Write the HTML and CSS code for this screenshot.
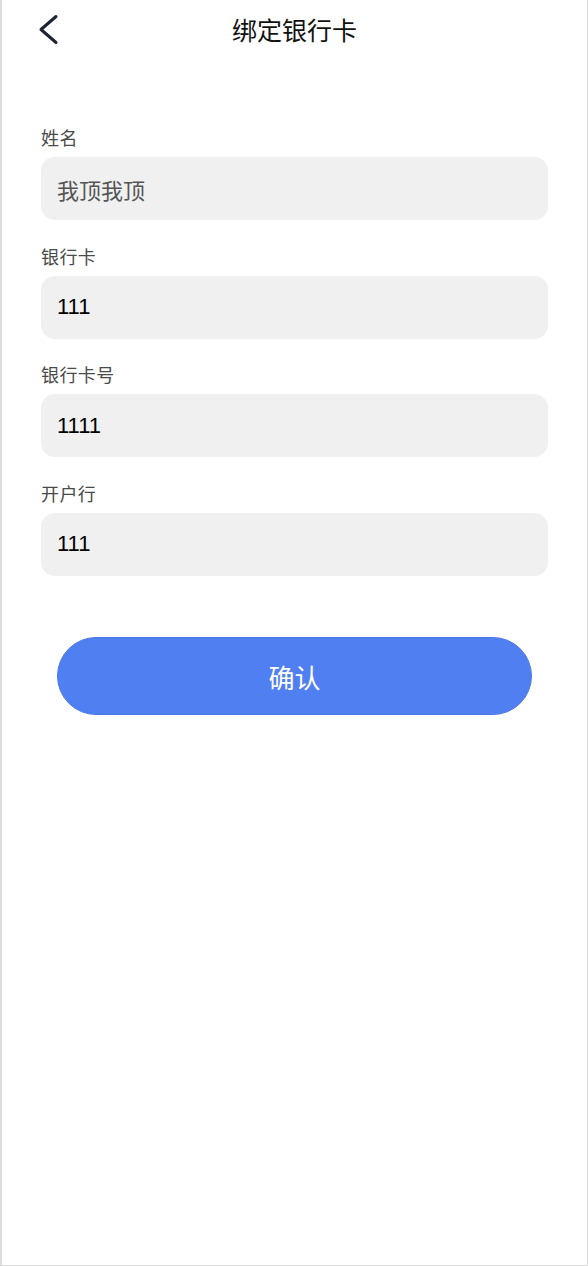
FILE: index.html
```html
<!DOCTYPE html>
<html lang="zh">
<head>
<meta charset="utf-8">
<title>绑定银行卡</title>
<link rel="stylesheet" href="styles.css">
</head>
<body>
<div class="page">
  <header class="header">
    <button class="back" aria-label="返回">
      <svg width="24" height="32" viewBox="0 0 24 32"><polyline points="19,2.5 4,15.5 19,28.5" fill="none" stroke="#1c2333" stroke-width="3" stroke-linecap="round" stroke-linejoin="round"/></svg>
    </button>
    <h1 class="title">绑定银行卡</h1>
  </header>
  <form class="form">
    <div class="field">
      <label class="label">姓名</label>
      <div class="input placeholder">我顶我顶</div>
    </div>
    <div class="field">
      <label class="label">银行卡</label>
      <div class="input">111</div>
    </div>
    <div class="field">
      <label class="label">银行卡号</label>
      <div class="input">1111</div>
    </div>
    <div class="field">
      <label class="label">开户行</label>
      <div class="input">111</div>
    </div>
    <div class="actions">
      <button type="button" class="confirm">确认</button>
    </div>
  </form>
</div>
</body>
</html>
```

FILE: styles.css
```css
* { box-sizing: border-box; }
html, body { margin: 0; padding: 0; background: #fff; }
body { font-family: "Liberation Sans", "Noto Sans CJK SC", sans-serif; }
.page {
  height: 1266px;
  border: 1px solid #dcdcdc;
  border-top: 0;
  border-left-width: 2px;
  background: #fff;
}
.header {
  height: 60px;
  display: flex;
  align-items: center;
  justify-content: center;
  position: relative;
}
.back {
  position: absolute;
  left: 35px;
  top: 14px;
  padding: 0;
  border: 0;
  background: none;
  width: 24px;
  height: 32px;
}
.back svg { display: block; }
.title {
  margin: 0 0 2px;
  font-size: 25px;
  font-weight: normal;
  color: #111;
  line-height: 30px;
  font-family: "Noto Sans CJK SC", sans-serif;
}
.form {
  padding: 65px 39px 0 39px;
  display: flex;
  flex-direction: column;
  gap: 23.5px;
}
.field { display: flex; flex-direction: column; gap: 8px; }
.label {
  font-size: 18px;
  line-height: 24px;
  color: #4a4a4a;
  font-family: "Noto Sans CJK SC", sans-serif;
  letter-spacing: 0.4px;
}
.input {
  height: 63px;
  border-radius: 14px;
  background: #f0f0f0;
  display: flex;
  align-items: center;
  padding-left: 16px;
  font-size: 22px;
  color: #000;
  font-family: "Liberation Sans", "Noto Sans CJK SC", sans-serif;
}
.input.placeholder {
  color: #555;
  font-size: 22px;
  font-family: "Noto Sans CJK SC", sans-serif;
}
.actions {
  display: flex;
  justify-content: center;
  padding-top: 38px;
}
.confirm {
  width: 475px;
  height: 78px;
  border: 1px solid #4a78e6;
  border-radius: 39px;
  background: #4f7ff1;
  color: #fff;
  font-size: 26px;
  font-family: "Noto Sans CJK SC", sans-serif;
}
```
